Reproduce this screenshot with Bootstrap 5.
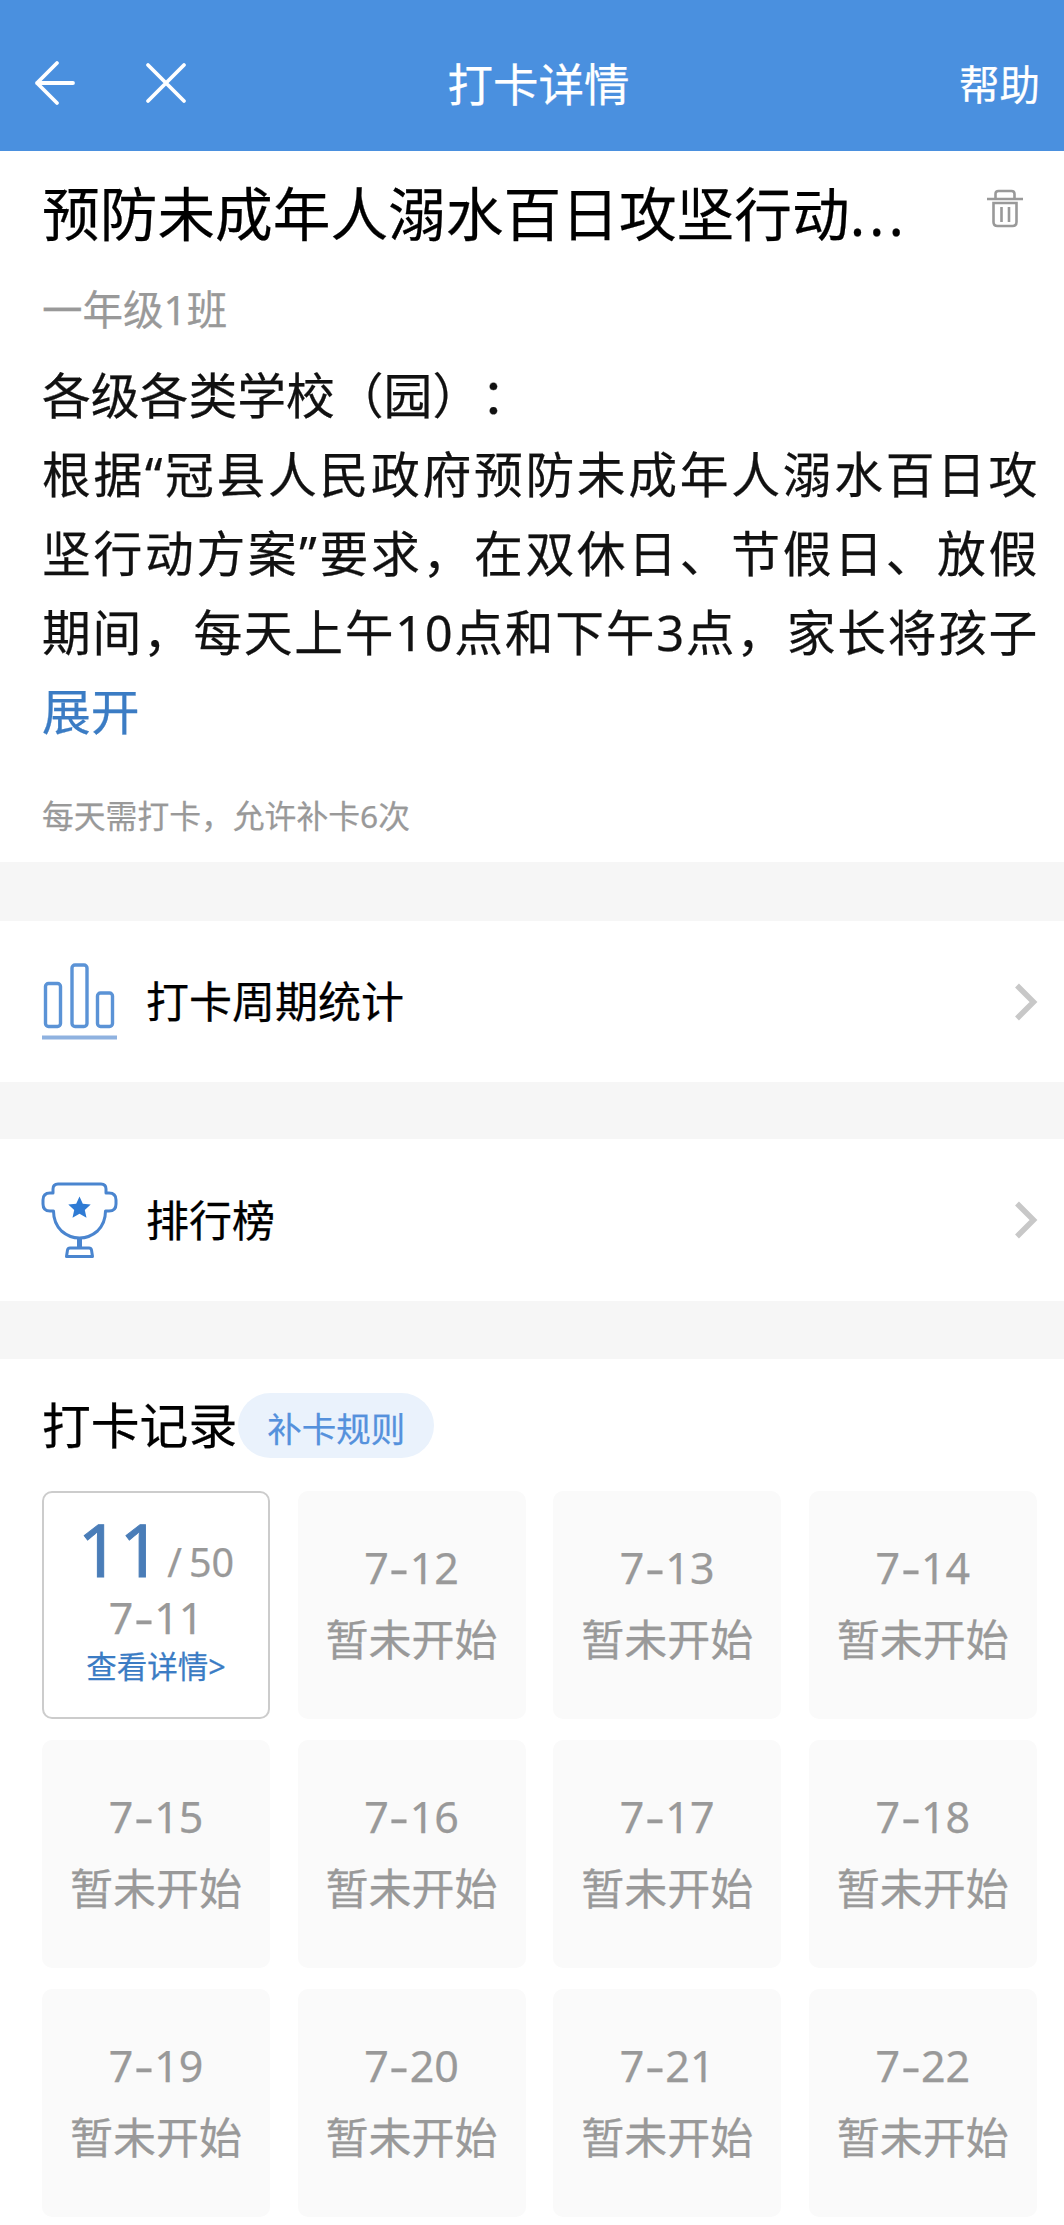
<!DOCTYPE html>
<html lang="zh-CN">
<head>
<meta charset="utf-8">
<meta name="viewport" content="width=device-width, initial-scale=1">
<title>打卡详情</title>
<link rel="stylesheet" href="https://cdn.jsdelivr.net/npm/bootstrap@5.3.0/dist/css/bootstrap.min.css">
<style>
body{font-family:"Noto Sans","Noto Sans CJK SC",sans-serif;color:#000;background:#f6f6f6;width:1064px;height:2225px;overflow:hidden;-webkit-text-stroke:.25px}
svg{display:block;flex:none}
.topbar{height:151px;background:#4a90df;padding:15px 24px 0 34px;color:#fff}
.topbar .side{width:220px}
.topbar .ttl{font-size:45.5px;line-height:1;padding:4px 0 0 3px}
.topbar .help{font-size:40.5px;line-height:1;padding-top:4px}
.close-x{margin-left:69px}
.intro{height:711px;padding:30px 26px 0 42px}
.intro h1{font-size:57.7px;line-height:66px;width:880px;font-weight:400;white-space:nowrap}
.intro h1 span{letter-spacing:4px}
.bin{margin:8px 14px 0 0}
.cls{font-size:40.5px;line-height:50px;margin-top:38px;color:#999}
.desc{font-size:48.8px;line-height:79px;margin-top:21px;color:#111;width:997px}
.desc div{white-space:nowrap}
.desc .first{font-feature-settings:"chws" 0,"kern" 0;font-kerning:none}
.desc .spread{letter-spacing:1.6px;text-align:justify;text-align-last:justify}
.more{color:#3b7cc4}
.rule{font-size:31.8px;line-height:40px;margin-top:45px;color:#999}
.entry{height:162px;padding:0 26px 0 41px;margin-bottom:58px}
.entry.top-one{margin-top:59px;height:161px;margin-bottom:57px}
.entry span{font-size:43px;line-height:1;margin-left:28px}
.log{height:866px;padding:32px 27px 0 42px}
.log h2{font-size:48.8px;line-height:64px;font-weight:400}
.pill{background:#eaf2fc;color:#5591dc;font-size:34.5px;line-height:71px;width:196px;height:65px;margin:2px 0 0 1px}
.days{display:grid;grid-template-columns:repeat(4,228px);column-gap:27.6px;row-gap:21px;margin-top:33px}
.day{height:228px;border-radius:10px;background:#fafafa;color:#999;font-size:43px;line-height:72px;padding-top:41px;text-align:center}
.dash{display:inline-block;font-style:normal;transform:scaleX(1.4);margin:0 3.5px}
.day.on{background:#fff;border:2px solid #ccc;padding-top:21px}
.day.on .tally{font-size:39.5px;line-height:70px;height:78px;color:#999}
.day.on .tally b{font-size:73px;font-weight:400;color:#4a7db8;-webkit-text-stroke:1px}
.day.on .tally em{font-style:normal;margin:0 7px 0 6px}
.day.on .date{line-height:52px}
.day.on .see{font-size:30.5px;line-height:44px;color:#3b7cc4}
</style>
</head>
<body>
<header class="topbar d-flex align-items-center justify-content-between">
  <div class="side d-flex align-items-center">
    <svg width="42" height="46" viewBox="0 0 42 46" fill="none" stroke="#fff" stroke-width="3.8" stroke-linecap="round" stroke-linejoin="round"><path d="M39 23H3M23 3L3 23l20 20"/></svg>
    <svg class="close-x" width="42" height="42" viewBox="0 0 42 42" fill="none" stroke="#fff" stroke-width="3.8" stroke-linecap="round"><path d="M3 3l36 36M39 3L3 39"/></svg>
  </div>
  <div class="ttl">打卡详情</div>
  <div class="side help text-end">帮助</div>
</header>
<section class="intro bg-white">
  <div class="d-flex justify-content-between align-items-start">
    <h1 class="m-0">预防未成年人溺水百日攻坚行动<span>...</span></h1>
    <svg class="bin" width="38" height="40" viewBox="0 0 38 40" fill="none" stroke="#999" stroke-width="2.6"><path d="M1 10h36M9.500 10V5q0-3 3-3h13q3 0 3 3v5M7.500 14h23v19q0 4-4 4h-15q-4 0-4-4zM15.500 18v15M23 18v15"/></svg>
  </div>
  <div class="cls">一年级1班</div>
  <div class="desc">
    <div class="first">各级各类学校（园<span>）</span><span class="d-inline-block">：</span></div>
    <div class="spread">根据“冠县人民政府预防未成年人溺水百日攻</div>
    <div class="spread">坚行动方案”要求，在双休日、节假日、放假</div>
    <div class="spread">期间，每天上午10点和下午3点，家长将孩子</div>
    <div class="more">展开</div>
  </div>
  <div class="rule">每天需打卡，允许补卡6次</div>
</section>

<section class="entry top-one bg-white d-flex align-items-center">
  <svg width="77" height="78" viewBox="0 0 77 78" fill="none" stroke="#5b93d6" stroke-width="3.400"><rect x="4.500" y="20.500" width="15" height="43" rx="3"/><rect x="31" y="2" width="15" height="61.500" rx="3"/><rect x="56.500" y="30" width="15" height="33.500" rx="3"/><path d="M1 74.500h75" stroke="#8fb2e0" stroke-width="4"/></svg>
  <span>打卡周期统计</span>
  <svg class="ms-auto" width="24" height="38" viewBox="0 0 24 38" fill="none" stroke="#c8c8c8" stroke-width="5.500"><path d="M3 2.500l16.500 16.500L3 35.500"/></svg>
</section>
<section class="entry bg-white d-flex align-items-center">
  <svg width="77" height="78" viewBox="0 0 77 78" fill="none" stroke="#4a85cf" stroke-width="3" stroke-linejoin="round"><path d="M17 3h43q5 0 5 5v4h3q7 0 7 7v4q0 7-7 7h-3.500q0 12-8 20-8 7-18 7t-18-7q-8-8-8-20H9q-7 0-7-7v-4q0-7 7-7h3V8q0-5 5-5z"/><path d="M38.500 57v10" stroke-width="5"/><path d="M29 67h19q2 0 2.500 2l1 6.500h-26l1-6.500q.5-2 2.500-2z"/><path d="M38.500 15.500l3.300 7.300 7.900.8-5.900 5.300 1.700 7.800-7-4-7 4 1.700-7.800-5.900-5.300 7.900-.8z" fill="#2f7bd4" stroke="none"/></svg>
  <span>排行榜</span>
  <svg class="ms-auto" width="24" height="38" viewBox="0 0 24 38" fill="none" stroke="#c8c8c8" stroke-width="5.500"><path d="M3 2.500l16.500 16.500L3 35.500"/></svg>
</section>

<section class="log bg-white">
  <div class="d-flex align-items-center">
    <h2 class="m-0">打卡记录</h2>
    <div class="pill rounded-pill text-center">补卡规则</div>
  </div>
  <div class="days">
    <div class="day on">
      <div class="tally"><b>11</b><em>/</em>50</div>
      <div class="date">7<i class="dash">-</i>11</div>
      <div class="see">查看详情&gt;</div>
    </div>
    <div class="day"><div class="date">7<i class="dash">-</i>12</div>暂未开始</div>
    <div class="day"><div class="date">7<i class="dash">-</i>13</div>暂未开始</div>
    <div class="day"><div class="date">7<i class="dash">-</i>14</div>暂未开始</div>
    <div class="day"><div class="date">7<i class="dash">-</i>15</div>暂未开始</div>
    <div class="day"><div class="date">7<i class="dash">-</i>16</div>暂未开始</div>
    <div class="day"><div class="date">7<i class="dash">-</i>17</div>暂未开始</div>
    <div class="day"><div class="date">7<i class="dash">-</i>18</div>暂未开始</div>
    <div class="day"><div class="date">7<i class="dash">-</i>19</div>暂未开始</div>
    <div class="day"><div class="date">7<i class="dash">-</i>20</div>暂未开始</div>
    <div class="day"><div class="date">7<i class="dash">-</i>21</div>暂未开始</div>
    <div class="day"><div class="date">7<i class="dash">-</i>22</div>暂未开始</div>
  </div>
</section>
<script src="https://cdn.jsdelivr.net/npm/bootstrap@5.3.0/dist/js/bootstrap.bundle.min.js"></script>
</body>
</html>
